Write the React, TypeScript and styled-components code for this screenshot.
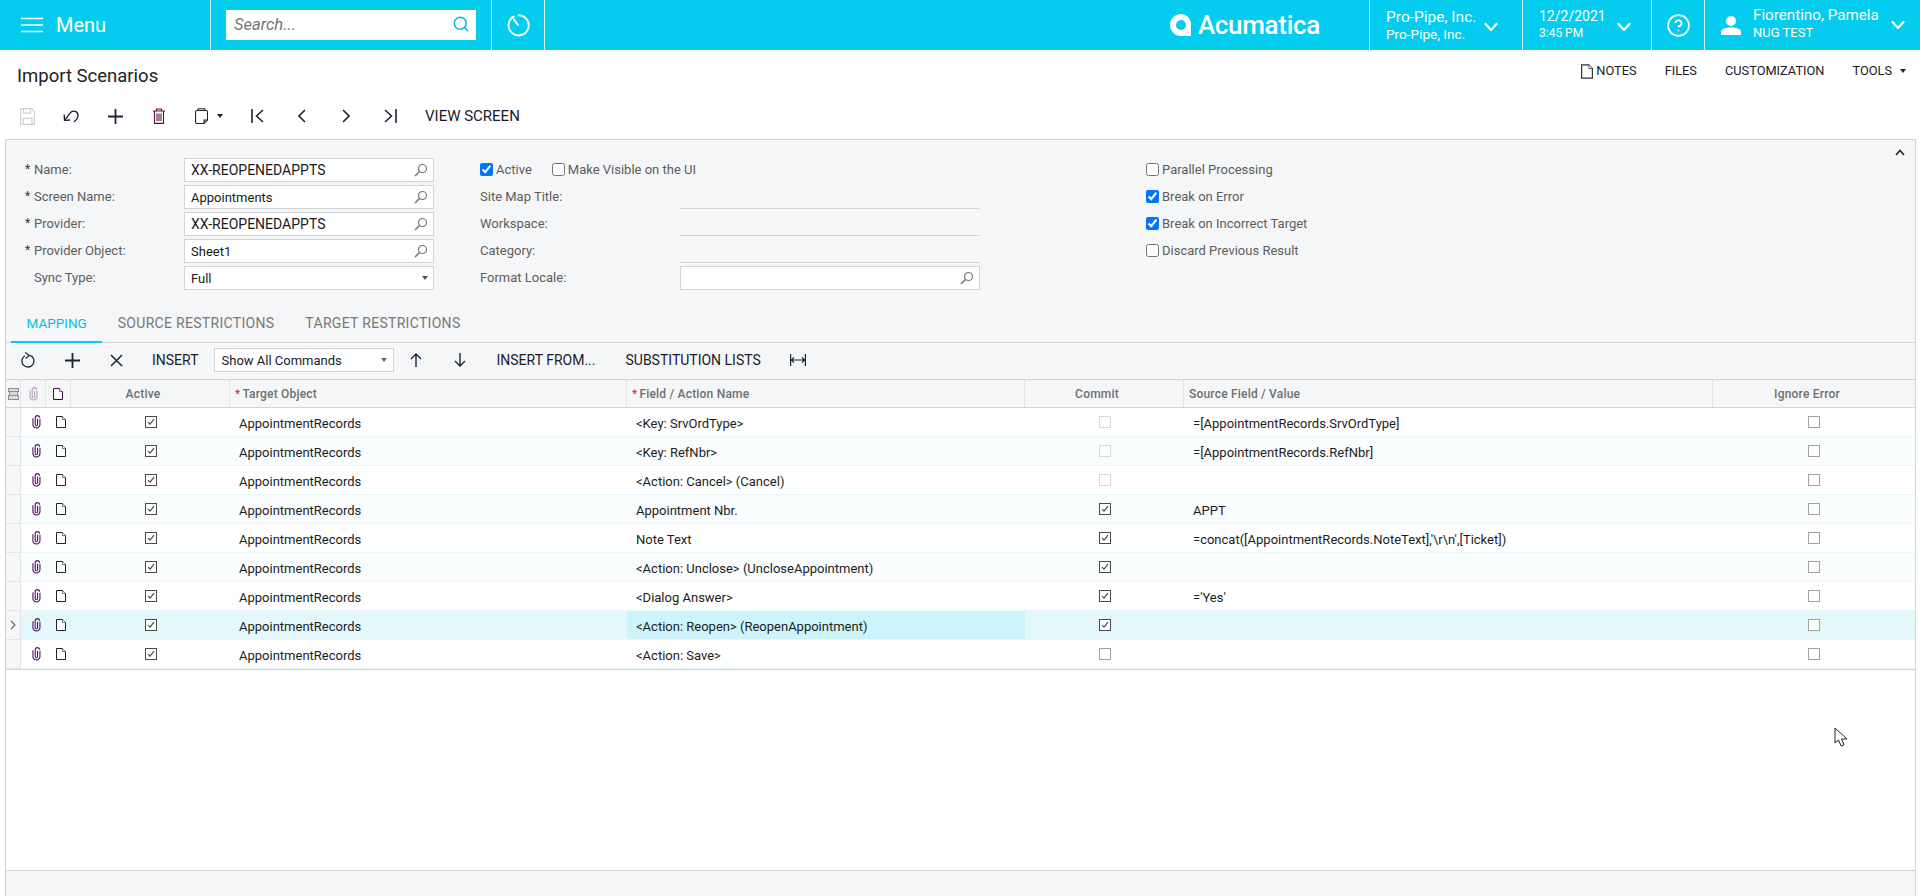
import React from 'react';
import styled, { createGlobalStyle } from 'styled-components';
import { CircleHelp, Search as SearchGlyph } from 'lucide-react';

const GlobalStyle = createGlobalStyle`
  html, body, #root {
    margin: 0;
    height: 100%;
  }
  body {
    font-family: Roboto, "Liberation Sans", sans-serif;
    font-size: 13px;
    color: #1c1c1c;
    background: #fff;
    overflow: hidden;
  }
`;

const Page = styled.div`
  position: relative;
  height: 896px;
  display: flex;
  flex-direction: column;
`;

/* top bar */
const TopBar = styled.header`
  height: 50px;
  flex: none;
  display: flex;
  background: #03ccee;
  color: #fff;
`;

const Section = styled.div<{ $w?: number }>`
  width: ${({ $w }) => ($w ? `${$w}px` : 'auto')};
  flex: none;
  box-sizing: border-box;
  height: 50px;
  display: flex;
  align-items: center;
  border-right: 1px solid #d8f6fc;
`;

const MenuSection = styled(Section)`
  padding-left: 21px;
  gap: 13px;
  font-size: 20px;
`;

const SearchSection = styled(Section)`
  padding-left: 15px;
`;

const SearchBox = styled.div`
  width: 250px;
  height: 30px;
  background: #fff;
  display: flex;
  align-items: center;
  justify-content: space-between;
  padding: 0 6px 2px 8px;
  box-sizing: border-box;
  color: #03b9da;
`;

const SearchHint = styled.span`
  font-style: italic;
  font-size: 16.5px;
  color: #757575;
`;

const TimerSection = styled(Section)`
  justify-content: center;
`;

const LogoArea = styled.div`
  flex: 1;
  display: flex;
  align-items: center;
  justify-content: flex-end;
  gap: 6px;
  padding-right: 49px;
  border-right: 1px solid #d8f6fc;
`;

const LogoText = styled.span`
  font-size: 26px;
  font-weight: 500;
  letter-spacing: -0.3px;
`;

const InfoSection = styled(Section)<{ $pl: number; $pr: number }>`
  justify-content: space-between;
  padding: 0 ${({ $pr }) => $pr}px 0 ${({ $pl }) => $pl}px;
`;

const Stack = styled.div<{ $gap: number; $up?: number }>`
  display: flex;
  flex-direction: column;
  gap: ${({ $gap }) => $gap}px;
  margin-bottom: ${({ $up }) => ($up || 0) * 2}px;
`;

const TopLine = styled.span<{ $size?: number }>`
  font-size: ${({ $size }) => $size || 15.5}px;
  line-height: 19px;
  white-space: nowrap;
`;

const SubLine = styled.span<{ $size: number }>`
  font-size: ${({ $size }) => $size}px;
  line-height: 15px;
  white-space: nowrap;
`;

const HelpSection = styled(Section)`
  justify-content: center;
`;

const UserSection = styled(InfoSection)`
  border-right: none;
`;

const UserLeft = styled.div`
  display: flex;
  align-items: center;
  gap: 12px;
`;

/* page title row */
const TitleRow = styled.div`
  height: 45px;
  flex: none;
  display: flex;
  align-items: flex-start;
  justify-content: space-between;
  padding: 0 14px 0 17px;
  box-sizing: border-box;
`;

const Title = styled.h1`
  margin: 15px 0 0;
  font-size: 18.5px;
  line-height: 22px;
  font-weight: 400;
  color: #222;
`;

const TopActions = styled.div`
  display: flex;
  align-items: center;
  gap: 28px;
  margin-top: 13px;
  font-size: 12.8px;
  line-height: 16px;
  color: #1a1a2a;
`;

const TopAction = styled.span`
  display: flex;
  align-items: center;
  gap: 3px;
  text-transform: uppercase;
`;

const Caret = styled.span<{ $color?: string }>`
  display: inline-block;
  width: 0;
  height: 0;
  border-left: 3.5px solid transparent;
  border-right: 3.5px solid transparent;
  border-top: 4px solid ${({ $color }) => $color || '#222'};
`;

const CaretGap = styled(Caret)`
  margin-left: 5px;
`;

/* toolbars */
const Toolbar = styled.div<{ $pl: number; $h: number }>`
  height: ${({ $h }) => $h}px;
  flex: none;
  display: flex;
  align-items: center;
  padding: 0 0 2px ${({ $pl }) => $pl}px;
  box-sizing: border-box;
`;

const IconButton = styled.span<{ $w?: number }>`
  width: ${({ $w }) => $w || 44}px;
  display: flex;
  align-items: center;
  justify-content: center;
  gap: 9px;
  flex: none;
`;

const TextButton = styled.span<{ $ml?: number; $mr?: number; $size?: number }>`
  margin-left: ${({ $ml }) => $ml || 0}px;
  margin-right: ${({ $mr }) => $mr || 0}px;
  font-size: ${({ $size }) => $size || 14}px;
  color: #1a1a2a;
  text-transform: uppercase;
  white-space: nowrap;
  flex: none;
`;

/* main frame */
const Frame = styled.main`
  flex: 1;
  margin: 0 4px 0 5px;
  display: flex;
  flex-direction: column;
  border-left: 1px solid #d2d4d7;
  border-right: 1px solid #d2d4d7;
  border-top: 1px solid #d2d4d7;
  min-height: 0;
`;

const FormPanel = styled.section`
  position: relative;
  height: 160px;
  flex: none;
  background: #f5f6f8;
  display: flex;
  padding: 18px 0 0 19px;
  box-sizing: border-box;
`;

const CollapseButton = styled.span`
  position: absolute;
  top: 9px;
  right: 10px;
  line-height: 0;
`;

const FormColumn = styled.div<{ $w: number }>`
  width: ${({ $w }) => $w}px;
  flex: none;
  display: flex;
  flex-direction: column;
  gap: 3px;
`;

const FormRow = styled.div<{ $label: number; $field: number }>`
  display: grid;
  grid-template-columns: ${({ $label }) => $label}px ${({ $field }) => $field}px;
  height: 24px;
  align-items: center;
`;

const FieldLabel = styled.label<{ $indent?: boolean }>`
  color: #5d5d5d;
  font-size: 13px;
  padding: 0 0 2px ${({ $indent }) => ($indent ? '9px' : '0')};
  white-space: nowrap;
  display: flex;
  align-items: center;
`;

const Star = styled.span`
  width: 9px;
  flex: none;
  color: #333;
  font-size: 12px;
`;

const InputBox = styled.div`
  height: 24px;
  box-sizing: border-box;
  background: #fff;
  border: 1px solid #d2d4d7;
  display: flex;
  align-items: center;
  justify-content: space-between;
  padding: 0 5px 0 6px;
  color: #1a1a1a;
  font-size: 13px;
`;

const CapsValue = styled.span`
  font-size: 14px;
`;

const ReadOnlyLine = styled.div`
  height: 24px;
  border-bottom: 1px solid #d2d4d7;
  box-sizing: border-box;
`;

const CheckRow = styled.div<{ $gap?: number }>`
  height: 24px;
  display: flex;
  align-items: center;
  gap: ${({ $gap }) => $gap || 0}px;
  padding-bottom: 2px;
  box-sizing: border-box;
`;

const CheckLabel = styled.label`
  display: flex;
  align-items: center;
  gap: 3px;
  color: #5d5d5d;
  font-size: 13px;
  white-space: nowrap;
`;

const NativeCheck = styled.input.attrs({ type: 'checkbox', readOnly: true })`
  width: 13px;
  height: 13px;
  margin: 0;
  flex: none;
`;

/* tabs */
const TabBar = styled.nav`
  height: 43px;
  flex: none;
  display: flex;
  align-items: flex-end;
  background: #f5f6f8;
  padding-left: 5px;
  border-bottom: 1px solid #d2d4d7;
  box-sizing: border-box;
`;

const Tab = styled.span<{ $active?: boolean }>`
  height: 31px;
  padding: 3px 15.5px 0;
  box-sizing: border-box;
  font-size: ${({ $active }) => ($active ? 13.5 : 14)}px;
  letter-spacing: ${({ $active }) => ($active ? 0 : 0.3)}px;
  line-height: 16px;
  text-transform: uppercase;
  color: ${({ $active }) => ($active ? '#03c0e2' : '#787878')};
  border-bottom: 2px solid ${({ $active }) => ($active ? '#03ccee' : 'transparent')};
  margin-bottom: -1px;
`;

const GridToolbar = styled(Toolbar)`
  background: #f5f6f8;
`;

const SelectBox = styled.div`
  width: 180px;
  height: 24px;
  margin-left: 15px;
  box-sizing: border-box;
  background: #fff;
  border: 1px solid #d2d4d7;
  display: flex;
  align-items: center;
  justify-content: space-between;
  padding: 0 6px 0 7px;
  font-size: 13px;
  color: #1a1a2a;
  flex: none;
`;

/* grid */
const COLUMNS = '15px 25px 25px 159px 397px 398px 159px 529px 1fr';

const GridHead = styled.div`
  display: grid;
  grid-template-columns: ${COLUMNS};
  height: 29px;
  flex: none;
  background: #f5f6f8;
  border-top: 1px solid #d2d4d7;
  border-bottom: 1px solid #d2d4d7;
  box-sizing: border-box;
`;

const HeadCell = styled.div<{ $center?: boolean }>`
  display: flex;
  align-items: center;
  justify-content: ${({ $center }) => ($center ? 'center' : 'flex-start')};
  padding: ${({ $center }) => ($center ? '0 14px 0 0' : '0 0 0 5px')};
  border-right: 1px solid #e2e4e7;
  color: #6c6f73;
  font-size: 12px;
  font-weight: 500;
  white-space: nowrap;
  letter-spacing: 0.2px;
  min-width: 0;
`;

const HeadIcon = styled.div`
  display: flex;
  align-items: center;
  justify-content: center;
  border-right: 1px solid #e2e4e7;
`;

const LastHeadCell = styled(HeadCell)`
  border-right: none;
`;

const RedStar = styled.span`
  color: #ee2222;
  margin-right: 2px;
  font-size: 12px;
  font-weight: 400;
`;

const Row = styled.div<{ $selected?: boolean; $tint?: boolean }>`
  display: grid;
  grid-template-columns: ${COLUMNS};
  height: 29px;
  box-sizing: border-box;
  flex: none;
  border-bottom: 1px solid #e8f7fa;
  background: ${({ $selected, $tint }) => ($selected ? '#e4f8fc' : $tint ? '#f9fdfe' : '#fff')};
`;

const RowGutter = styled.div`
  background: #f5f6f8;
  border-right: 1px solid #e2e4e7;
  border-bottom: 1px solid #e2e4e7;
  margin-bottom: -1px;
  display: flex;
  align-items: center;
  justify-content: center;
`;

const IconCell = styled.div`
  display: flex;
  align-items: center;
  justify-content: center;
  padding: 0 0 0 5px;
`;

const Cell = styled.div<{ $active?: boolean }>`
  display: flex;
  align-items: center;
  padding: 2px 0 0 9px;
  font-size: 13px;
  color: #1c1c1c;
  white-space: nowrap;
  background: ${({ $active }) => ($active ? '#cdf4fb' : 'transparent')};
`;

const CheckCell = styled.div`
  display: flex;
  align-items: center;
  justify-content: center;
`;

const GridCheck = styled.span<{ $state: 'on' | 'off' | 'disabled' }>`
  width: 12px;
  height: 12px;
  box-sizing: border-box;
  display: flex;
  align-items: center;
  justify-content: center;
  background: #fff;
  border: 1px solid
    ${({ $state }) => ($state === 'on' ? '#4a4a4a' : $state === 'off' ? '#a2a2a2' : '#d8d8d8')};
`;

const GridEnd = styled.div`
  height: 1px;
  flex: none;
  background: #d2d4d7;
`;

const Blank = styled.div`
  flex: 1;
  background: #fff;
`;

const Footer = styled.footer`
  height: 26px;
  flex: none;
  background: #f5f6f8;
  border-top: 1px solid #d2d4d7;
  box-sizing: border-box;
`;

const Pointer = styled.svg`
  position: absolute;
  left: 1834px;
  top: 727px;
`;

const ChevronMark = styled.svg<{ $down?: boolean }>`
  flex: none;
  margin-top: ${({ $down }) => ($down ? 4 : 0)}px;
`;

const Narrow = styled.div`
  width: 300px;
`;

/* icons */
const stroke = { fill: 'none', strokeLinecap: 'round', strokeLinejoin: 'round' } as const;

const Hamburger = () => (
  <svg width="22" height="16" viewBox="0 0 22 16" stroke="#fff" strokeWidth="1.6">
    <path d="M0 1.5h22M0 8h22M0 14.5h22" />
  </svg>
);

const Timer = () => (
  <svg width="26" height="26" viewBox="0 0 24 24" stroke="#fff" strokeWidth="1.8" {...stroke}>
    <path d="M8 4.2A9.3 9.3 0 1 0 12.5 3" />
    <path d="M12 12L8.2 6.8" />
  </svg>
);

const Chevron = ({ down }: { down?: boolean }) => (
  <ChevronMark $down={down} width="14" height="10" viewBox="0 0 14 10" stroke="#fff" strokeWidth="2.2" {...stroke}>
    <path d="M1.5 2L7 8l5.5-6" />
  </ChevronMark>
);

const Logo = () => (
  <svg width="22" height="22" viewBox="0 0 22 22">
    <path
      fill="#fff"
      fillRule="evenodd"
      d="M11 0a10 10 0 0 1 10 10v11a1 1 0 0 1-1 1H11A11 11 0 0 1 11 0zm0 6a5 5 0 1 0 0 10 5 5 0 0 0 0-10z"
    />
  </svg>
);

const UserIcon = () => (
  <svg width="20" height="19" viewBox="0 0 20 19" fill="#fff">
    <circle cx="10" cy="5" r="5" />
    <path d="M0 19v-3c0-3 3.5-4.5 10-4.5S20 13 20 16v3z" />
  </svg>
);

const DocIcon = ({ color = '#222', w = 10, h = 12 }: { color?: string; w?: number; h?: number }) => (
  <svg width={w} height={h} viewBox="0 0 10 12" stroke={color} strokeWidth="1" fill="#fff">
    <path d="M.5.5h6l3 3v8h-9z" />
    <path d="M6.5.5v3h3" strokeWidth=".6" />
  </svg>
);

const Lens = () => (
  <svg width="14" height="14" viewBox="0 0 14 14" stroke="#777" strokeWidth="1.2" fill="none">
    <circle cx="8.5" cy="5.5" r="4" />
    <path d="M5.5 8.5L1 13" strokeWidth="1.6" />
  </svg>
);

const Save = () => (
  <svg width="15" height="17" viewBox="0 0 15 17" stroke="#cfcfcf" strokeWidth="1.2" fill="none">
    <path d="M.6.6h11l2.8 2.8v13H.6z" />
    <path d="M3.5.6v4.5h7V.6M3 16.4v-6h9v6" />
  </svg>
);

const Undo = () => (
  <svg width="16" height="13" viewBox="0 0 16 13" stroke="#1a1a2a" strokeWidth="1.3" fill="none">
    <path d="M1.2 4.5l.3 5.8L7.2 10" />
    <path d="M1.5 10.3L6.8 3.4C9.5-.2 15 .8 15 5.2c0 2.8-1.8 5-4.2 6.6" />
  </svg>
);

const Plus = () => (
  <svg width="15" height="15" viewBox="0 0 15 15" stroke="#1a2535" strokeWidth="1.8">
    <path d="M7.5 0v15M0 7.5h15" />
  </svg>
);

const Cross = () => (
  <svg width="13" height="13" viewBox="0 0 13 13" stroke="#1a2535" strokeWidth="1.5">
    <path d="M1 1l11 11M12 1L1 12" />
  </svg>
);

const Trash = () => (
  <svg width="12" height="16" viewBox="0 0 12 16" stroke="#5c0f4e" strokeWidth="1.1" fill="none">
    <path d="M0 3h12M3.5 3V1h5v2M1.5 3v12.4h9V3M4 5.5v7.5M6 5.5v7.5M8 5.5v7.5" />
  </svg>
);

const Clipboard = () => (
  <svg width="13" height="16" viewBox="0 0 13 16" stroke="#222" strokeWidth="1.1" fill="none">
    <path d="M2 2.5h9a1.5 1.5 0 0 1 1.5 1.5v8l-3.5 3.5H2A1.5 1.5 0 0 1 .5 14V4A1.5 1.5 0 0 1 2 2.5z" />
    <path d="M3 2.5V.8h7v1.7M12.5 12H9v3.5" />
  </svg>
);

const Nav = ({ d, w = 14 }: { d: string; w?: number }) => (
  <svg width={w} height="14" viewBox={`0 0 ${w} 14`} stroke="#1a2535" strokeWidth="1.6" fill="none">
    <path d={d} />
  </svg>
);

const Refresh = () => (
  <svg width="14" height="16" viewBox="0 0 14 16" stroke="#1a2535" strokeWidth="1.3" fill="none">
    <path d="M4 3.8A6 6 0 1 0 9 3.4" />
    <path d="M4.2.6L8.2 3.6 4.6 6.6" />
  </svg>
);

const Arrow = ({ down }: { down?: boolean }) => (
  <svg width="12" height="14" viewBox="0 0 12 14" stroke="#1a2535" strokeWidth="1.4" fill="none">
    <path d={down ? 'M6 0v13M1 8l5 5 5-5' : 'M6 14V1M1 6l5-5 5 5'} />
  </svg>
);

const FitColumns = () => (
  <svg width="16" height="12" viewBox="0 0 16 12" stroke="#1a2535" strokeWidth="1.2" fill="none">
    <path d="M.6 0v12M15.4 0v12M1 6h14M4 3.5L1.5 6 4 8.5M12 3.5L14.5 6 12 8.5" />
  </svg>
);

const Clip = ({ color = '#5e1570' }: { color?: string }) => (
  <svg width="9" height="14" viewBox="0 0 8 13" stroke={color} strokeWidth="1.05" fill="none">
    <path d="M5 3.5v5.4a1.1 1.1 0 0 1-2.2 0V2.6a2 2 0 0 1 4 0" />
    <path d="M7.2 3.4v5.9a3.3 3.3 0 0 1-6.5 0V3" />
  </svg>
);

const GridMenu = () => (
  <svg width="11" height="12" viewBox="0 0 11 12" stroke="#8c8f93" strokeWidth="1" fill="#d9dbde">
    <rect x=".5" y=".5" width="10" height="3" />
    <rect x="1.5" y="3.5" width="8" height="4" />
    <rect x=".5" y="7.5" width="10" height="4" />
  </svg>
);

const Tick = () => (
  <svg width="8" height="8" viewBox="0 0 8 8" stroke="#444" strokeWidth="1.1" fill="none">
    <path d="M1 4l2 2.2L7 1.2" />
  </svg>
);

const RowMark = () => (
  <svg width="6" height="10" viewBox="0 0 6 10" stroke="#666" strokeWidth="1.1" fill="none">
    <path d="M1 1l4 4-4 4" />
  </svg>
);

const LookupField = ({ value, caps }: { value?: string; caps?: boolean }) => (
  <InputBox>
    {caps ? <CapsValue>{value}</CapsValue> : <span>{value}</span>}
    <Lens />
  </InputBox>
);

type CommitState = 'on' | 'off' | 'disabled';

const rows: { field: string; commit: CommitState; source: string }[] = [
  { field: '<Key: SrvOrdType>', commit: 'disabled', source: '=[AppointmentRecords.SrvOrdType]' },
  { field: '<Key: RefNbr>', commit: 'disabled', source: '=[AppointmentRecords.RefNbr]' },
  { field: '<Action: Cancel> (Cancel)', commit: 'disabled', source: '' },
  { field: 'Appointment Nbr.', commit: 'on', source: 'APPT' },
  { field: 'Note Text', commit: 'on', source: "=concat([AppointmentRecords.NoteText],'\\r\\n',[Ticket])" },
  { field: '<Action: Unclose> (UncloseAppointment)', commit: 'on', source: '' },
  { field: '<Dialog Answer>', commit: 'on', source: "='Yes'" },
  { field: '<Action: Reopen> (ReopenAppointment)', commit: 'on', source: '' },
  { field: '<Action: Save>', commit: 'off', source: '' },
];

const SELECTED_ROW = 7;

function App() {
  return (
    <Page>
      <GlobalStyle />
      <TopBar>
        <MenuSection $w={211}>
          <Hamburger />
          <span>Menu</span>
        </MenuSection>
        <SearchSection $w={281}>
          <SearchBox>
            <SearchHint>Search...</SearchHint>
            <SearchGlyph size={18} strokeWidth={2} />
          </SearchBox>
        </SearchSection>
        <TimerSection $w={53}>
          <Timer />
        </TimerSection>
        <LogoArea>
          <Logo />
          <LogoText>Acumatica</LogoText>
        </LogoArea>
        <InfoSection $w={153} $pl={16} $pr={24}>
          <Stack $gap={-2}>
            <TopLine>Pro-Pipe, Inc.</TopLine>
            <SubLine $size={13.6}>Pro-Pipe, Inc.</SubLine>
          </Stack>
          <Chevron down />
        </InfoSection>
        <InfoSection $w={129} $pl={16} $pr={20}>
          <Stack $gap={-1} $up={1}>
            <TopLine $size={14}>12/2/2021</TopLine>
            <SubLine $size={12}>3:45 PM</SubLine>
          </Stack>
          <Chevron down />
        </InfoSection>
        <HelpSection $w={53}>
          <CircleHelp size={25} strokeWidth={1.6} />
        </HelpSection>
        <UserSection $w={215} $pl={16} $pr={15}>
          <UserLeft>
            <UserIcon />
            <Stack $gap={0} $up={2.5}>
              <TopLine $size={15.2}>Fiorentino, Pamela</TopLine>
              <SubLine $size={13}>NUG TEST</SubLine>
            </Stack>
          </UserLeft>
          <Chevron />
        </UserSection>
      </TopBar>

      <TitleRow>
        <Title>Import Scenarios</Title>
        <TopActions>
          <TopAction>
            <DocIcon w={12} h={15} color="#333" />
            Notes
          </TopAction>
          <TopAction>Files</TopAction>
          <TopAction>Customization</TopAction>
          <TopAction>
            Tools
            <CaretGap />
          </TopAction>
        </TopActions>
      </TitleRow>

      <Toolbar $pl={5} $h={44}>
        <IconButton><Save /></IconButton>
        <IconButton><Undo /></IconButton>
        <IconButton><Plus /></IconButton>
        <IconButton><Trash /></IconButton>
        <IconButton $w={55}><Clipboard /><Caret /></IconButton>
        <IconButton><Nav w={14} d="M1 0v14M12 1L5.5 7l6.5 6" /></IconButton>
        <IconButton><Nav w={8} d="M7 1L1 7l6 6" /></IconButton>
        <IconButton><Nav w={8} d="M1 1l6 6-6 6" /></IconButton>
        <IconButton><Nav w={14} d="M2 1l6.5 6L2 13M13 0v14" /></IconButton>
        <TextButton $ml={13} $size={15}>View Screen</TextButton>
      </Toolbar>

      <Frame>
        <FormPanel>
          <CollapseButton>
            <svg width="10" height="7" viewBox="0 0 10 7" stroke="#222" strokeWidth="1.6" fill="none">
              <path d="M1 6l4-4.5L9 6" />
            </svg>
          </CollapseButton>
          <FormColumn $w={455}>
            <FormRow $label={159} $field={250}>
              <FieldLabel><Star>*</Star>Name:</FieldLabel>
              <LookupField value="XX-REOPENEDAPPTS" caps />
            </FormRow>
            <FormRow $label={159} $field={250}>
              <FieldLabel><Star>*</Star>Screen Name:</FieldLabel>
              <LookupField value="Appointments" />
            </FormRow>
            <FormRow $label={159} $field={250}>
              <FieldLabel><Star>*</Star>Provider:</FieldLabel>
              <LookupField value="XX-REOPENEDAPPTS" caps />
            </FormRow>
            <FormRow $label={159} $field={250}>
              <FieldLabel><Star>*</Star>Provider Object:</FieldLabel>
              <LookupField value="Sheet1" />
            </FormRow>
            <FormRow $label={159} $field={250}>
              <FieldLabel $indent>Sync Type:</FieldLabel>
              <InputBox>
                <span>Full</span>
                <Caret $color="#555" />
              </InputBox>
            </FormRow>
          </FormColumn>

          <FormColumn $w={666}>
            <CheckRow $gap={20}>
              <CheckLabel><NativeCheck defaultChecked />Active</CheckLabel>
              <CheckLabel><NativeCheck />Make Visible on the UI</CheckLabel>
            </CheckRow>
            <FormRow $label={200} $field={300}>
              <FieldLabel>Site Map Title:</FieldLabel>
              <Narrow><ReadOnlyLine /></Narrow>
            </FormRow>
            <FormRow $label={200} $field={300}>
              <FieldLabel>Workspace:</FieldLabel>
              <Narrow><ReadOnlyLine /></Narrow>
            </FormRow>
            <FormRow $label={200} $field={300}>
              <FieldLabel>Category:</FieldLabel>
              <Narrow><ReadOnlyLine /></Narrow>
            </FormRow>
            <FormRow $label={200} $field={300}>
              <FieldLabel>Format Locale:</FieldLabel>
              <Narrow><LookupField /></Narrow>
            </FormRow>
          </FormColumn>

          <FormColumn $w={300}>
            <CheckRow><CheckLabel><NativeCheck />Parallel Processing</CheckLabel></CheckRow>
            <CheckRow><CheckLabel><NativeCheck defaultChecked />Break on Error</CheckLabel></CheckRow>
            <CheckRow><CheckLabel><NativeCheck defaultChecked />Break on Incorrect Target</CheckLabel></CheckRow>
            <CheckRow><CheckLabel><NativeCheck />Discard Previous Result</CheckLabel></CheckRow>
          </FormColumn>
        </FormPanel>

        <TabBar>
          <Tab $active>Mapping</Tab>
          <Tab>Source Restrictions</Tab>
          <Tab>Target Restrictions</Tab>
        </TabBar>

        <GridToolbar $pl={0} $h={36}>
          <IconButton><Refresh /></IconButton>
          <IconButton><Plus /></IconButton>
          <IconButton><Cross /></IconButton>
          <TextButton $ml={14}>Insert</TextButton>
          <SelectBox>
            <span>Show All Commands</span>
            <Caret $color="#666" />
          </SelectBox>
          <IconButton><Arrow /></IconButton>
          <IconButton><Arrow down /></IconButton>
          <TextButton $ml={15} $mr={30}>Insert From...</TextButton>
          <TextButton $mr={15}>Substitution Lists</TextButton>
          <IconButton><FitColumns /></IconButton>
        </GridToolbar>

        <GridHead>
          <HeadIcon><GridMenu /></HeadIcon>
          <HeadIcon><Clip color="#b9a3bb" /></HeadIcon>
          <HeadIcon><DocIcon color="#3a1040" /></HeadIcon>
          <HeadCell $center>Active</HeadCell>
          <HeadCell><RedStar>*</RedStar>Target Object</HeadCell>
          <HeadCell><RedStar>*</RedStar>Field / Action Name</HeadCell>
          <HeadCell $center>Commit</HeadCell>
          <HeadCell>Source Field / Value</HeadCell>
          <LastHeadCell $center>Ignore Error</LastHeadCell>
        </GridHead>

        {rows.map((row, i) => (
          <Row key={i} $selected={i === SELECTED_ROW} $tint={i % 2 === 1}>
            <RowGutter>{i === SELECTED_ROW && <RowMark />}</RowGutter>
            <IconCell><Clip /></IconCell>
            <IconCell><DocIcon /></IconCell>
            <CheckCell><GridCheck $state="on"><Tick /></GridCheck></CheckCell>
            <Cell>AppointmentRecords</Cell>
            <Cell $active={i === SELECTED_ROW}>{row.field}</Cell>
            <CheckCell>
              <GridCheck $state={row.commit}>{row.commit === 'on' && <Tick />}</GridCheck>
            </CheckCell>
            <Cell>{row.source}</Cell>
            <CheckCell><GridCheck $state="off" /></CheckCell>
          </Row>
        ))}
        <GridEnd />
        <Blank />
        <Footer />
      </Frame>

      <Pointer width="14" height="21" viewBox="0 0 14 21" fill="#fff" stroke="#1b2330" strokeWidth="1">
        <path d="M1 1v15l3.5-3 2.5 6 3-1.2L7.5 12H13z" />
      </Pointer>
    </Page>
  );
}

export default App;
